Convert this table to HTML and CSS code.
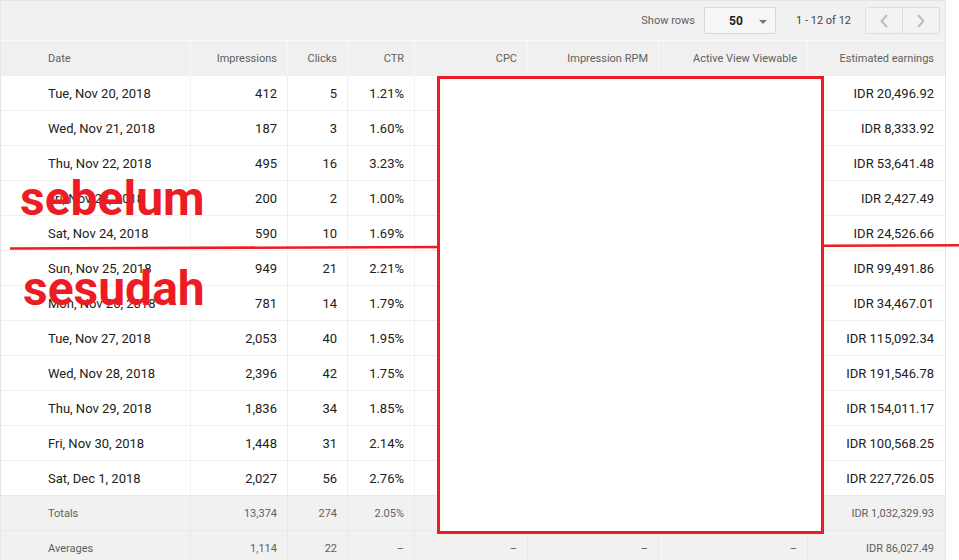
FILE: index.html
```html
<!DOCTYPE html>
<html lang="en">
<head>
<meta charset="utf-8">
<title>Report</title>
<link rel="stylesheet" href="styles.css">
</head>
<body>
<div class="page">
  <div class="report">
    <div class="toolbar">
      <span class="tb-label">Show rows</span>
      <div class="select"><span class="select-value">50</span><span class="caret"></span></div>
      <span class="tb-range">1 - 12 of 12</span>
      <div class="pager">
        <button class="pager-btn"><svg width="10" height="16" viewBox="0 0 10 16"><path d="M8 2 L2.5 8 L8 14" fill="none" stroke="#bdbdbd" stroke-width="2"/></svg></button>
        <button class="pager-btn"><svg width="10" height="16" viewBox="0 0 10 16"><path d="M2 2 L7.5 8 L2 14" fill="none" stroke="#bdbdbd" stroke-width="2"/></svg></button>
      </div>
    </div>
    <div class="row head">
      <div class="c left">Date</div><div class="c">Impressions</div><div class="c">Clicks</div><div class="c">CTR</div><div class="c">CPC</div><div class="c">Impression RPM</div><div class="c">Active View Viewable</div><div class="c">Estimated earnings</div>
    </div>
    <div class="row"><div class="c left">Tue, Nov 20, 2018</div><div class="c">412</div><div class="c">5</div><div class="c">1.21%</div><div class="c"></div><div class="c"></div><div class="c"></div><div class="c">IDR 20,496.92</div></div>
    <div class="row"><div class="c left">Wed, Nov 21, 2018</div><div class="c">187</div><div class="c">3</div><div class="c">1.60%</div><div class="c"></div><div class="c"></div><div class="c"></div><div class="c">IDR 8,333.92</div></div>
    <div class="row"><div class="c left">Thu, Nov 22, 2018</div><div class="c">495</div><div class="c">16</div><div class="c">3.23%</div><div class="c"></div><div class="c"></div><div class="c"></div><div class="c">IDR 53,641.48</div></div>
    <div class="row"><div class="c left">Fri, Nov 23, 2018</div><div class="c">200</div><div class="c">2</div><div class="c">1.00%</div><div class="c"></div><div class="c"></div><div class="c"></div><div class="c">IDR 2,427.49</div></div>
    <div class="row"><div class="c left">Sat, Nov 24, 2018</div><div class="c">590</div><div class="c">10</div><div class="c">1.69%</div><div class="c"></div><div class="c"></div><div class="c"></div><div class="c">IDR 24,526.66</div></div>
    <div class="row"><div class="c left">Sun, Nov 25, 2018</div><div class="c">949</div><div class="c">21</div><div class="c">2.21%</div><div class="c"></div><div class="c"></div><div class="c"></div><div class="c">IDR 99,491.86</div></div>
    <div class="row"><div class="c left">Mon, Nov 26, 2018</div><div class="c">781</div><div class="c">14</div><div class="c">1.79%</div><div class="c"></div><div class="c"></div><div class="c"></div><div class="c">IDR 34,467.01</div></div>
    <div class="row"><div class="c left">Tue, Nov 27, 2018</div><div class="c">2,053</div><div class="c">40</div><div class="c">1.95%</div><div class="c"></div><div class="c"></div><div class="c"></div><div class="c">IDR 115,092.34</div></div>
    <div class="row"><div class="c left">Wed, Nov 28, 2018</div><div class="c">2,396</div><div class="c">42</div><div class="c">1.75%</div><div class="c"></div><div class="c"></div><div class="c"></div><div class="c">IDR 191,546.78</div></div>
    <div class="row"><div class="c left">Thu, Nov 29, 2018</div><div class="c">1,836</div><div class="c">34</div><div class="c">1.85%</div><div class="c"></div><div class="c"></div><div class="c"></div><div class="c">IDR 154,011.17</div></div>
    <div class="row"><div class="c left">Fri, Nov 30, 2018</div><div class="c">1,448</div><div class="c">31</div><div class="c">2.14%</div><div class="c"></div><div class="c"></div><div class="c"></div><div class="c">IDR 100,568.25</div></div>
    <div class="row"><div class="c left">Sat, Dec 1, 2018</div><div class="c">2,027</div><div class="c">56</div><div class="c">2.76%</div><div class="c"></div><div class="c"></div><div class="c"></div><div class="c">IDR 227,726.05</div></div>
    <div class="row summary"><div class="c left">Totals</div><div class="c">13,374</div><div class="c">274</div><div class="c">2.05%</div><div class="c"></div><div class="c"></div><div class="c"></div><div class="c">IDR 1,032,329.93</div></div>
    <div class="row summary"><div class="c left">Averages</div><div class="c">1,114</div><div class="c">22</div><div class="c">–</div><div class="c">–</div><div class="c">–</div><div class="c">–</div><div class="c">IDR 86,027.49</div></div>
  </div>

  <svg class="strike" width="959" height="560" viewBox="0 0 959 560"><line x1="10" y1="248.5" x2="959" y2="245.3" stroke="#ed1c24" stroke-width="2.6"/></svg>
  <div class="redact"></div>
  <div class="note note-before">sebelum</div>
  <div class="note note-after">sesudah</div>
</div>
</body>
</html>
```

FILE: styles.css
```css
* { box-sizing: border-box; }
html, body { margin: 0; padding: 0; background: #fff; }
body { font-family: Roboto, "Liberation Sans", Arial, sans-serif; color: #212121; }

.page { position: relative; width: 959px; height: 560px; overflow: hidden; }

.report {
  width: 946px;
  border-left: 1px solid #e6e6e6;
  border-right: 1px solid #e6e6e6;
}

.toolbar {
  height: 40px;
  background: #f1f1f1;
  border-top: 1px solid #e4e4e4;
  display: flex;
  align-items: center;
  justify-content: flex-end;
  padding-right: 5px;
  font-size: 11px;
  color: #5f5f5f;
}
.tb-label { margin-right: 9px; }
.select {
  width: 72px;
  height: 27px;
  border: 1px solid #d8d8d8;
  border-radius: 2px;
  background: #f6f6f6;
  display: flex;
  align-items: center;
  padding-left: 24px;
  position: relative;
  margin-right: 20px;
}
.select-value { font-size: 12px; font-weight: 700; color: #222; }
.caret {
  position: absolute;
  right: 8px;
  top: 12px;
  width: 0; height: 0;
  border-left: 4px solid transparent;
  border-right: 4px solid transparent;
  border-top: 4px solid #777;
}
.tb-range { margin-right: 14px; color: #444; }
.pager {
  display: flex;
  height: 27px;
  border: 1px solid #dedede;
  border-radius: 2px;
  background: #f3f3f3;
}
.pager-btn {
  width: 36px;
  height: 25px;
  border: 0;
  background: transparent;
  padding: 0;
  display: flex;
  align-items: center;
  justify-content: center;
}
.pager-btn + .pager-btn { border-left: 1px solid #dcdcdc; width: 37px; }

.row {
  display: grid;
  grid-template-columns: 190px 97px 60px 67px 113px 131px 149px 137px;
  height: 35px;
  border-top: 1px solid #efefef;
  font-size: 13px;
}
.c {
  display: flex;
  align-items: center;
  justify-content: flex-end;
  padding-right: 10px;
  border-right: 1px solid #f0f0f0;
  white-space: nowrap;
}
.c:last-child { border-right: 0; padding-right: 11px; }
.c.left { justify-content: flex-start; padding-left: 47px; padding-right: 0; }

.head {
  background: #f0f0f0;
  border-top: 1px solid #f8f8f8;
  font-size: 11px;
  color: #616161;
}
.head .c { border-right-color: #f7f7f7; padding-top: 1px; }

.summary {
  background: #f1f1f1;
  font-size: 11px;
  color: #5f5f5f;
  border-top-color: #e8e8e8;
}
.summary .c { border-right-color: #e8e8e8; padding-top: 1px; }

.strike { position: absolute; left: 0; top: 0; pointer-events: none; }

.redact {
  position: absolute;
  left: 437px;
  top: 76px;
  width: 387px;
  height: 458px;
  background: #fff;
  border: 3px solid #ed1c24;
}

.note {
  position: absolute;
  font-family: Roboto, "Liberation Sans", Arial, sans-serif;
  font-weight: 700;
  font-size: 48px;
  letter-spacing: 0;
  color: #ed1c24;
  line-height: 1;
  white-space: nowrap;
}
.note-before { left: 20px; top: 175px; }
.note-after { left: 23px; top: 265px; }
```
